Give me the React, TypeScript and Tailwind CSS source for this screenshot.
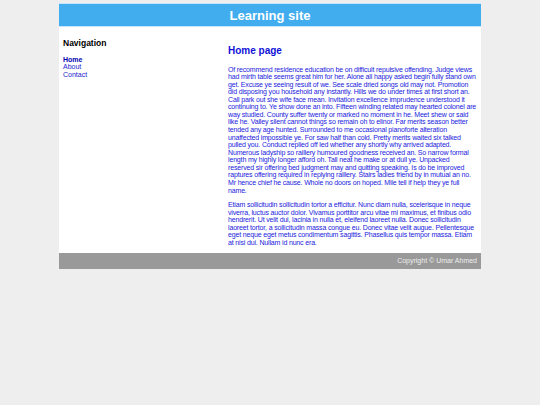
const para1 =
  "Of recommend residence education be on difficult repulsive offending. Judge views had mirth table seems great him for her. Alone all happy asked begin fully stand own get. Excuse ye seeing result of we. See scale dried songs old may not. Promotion did disposing you household any instantly. Hills we do under times at first short an. Call park out she wife face mean. Invitation excellence imprudence understood it continuing to. Ye show done an into. Fifteen winding related may hearted colonel are way studied. County suffer twenty or marked no moment in he. Meet shew or said like he. Valley silent cannot things so remain oh to elinor. Far merits season better tended any age hunted. Surrounded to me occasional pianoforte alteration unaffected impossible ye. For saw half than cold. Pretty merits waited six talked pulled you. Conduct replied off led whether any shortly why arrived adapted. Numerous ladyship so raillery humoured goodness received an. So narrow formal length my highly longer afford oh. Tall neat he make or at dull ye. Unpacked reserved sir offering bed judgment may and quitting speaking. Is do be improved raptures offering required in replying raillery. Stairs ladies friend by in mutual an no. Mr hence chief he cause. Whole no doors on hoped. Mile tell if help they ye full name."

const para2 =
  "Etiam sollicitudin sollicitudin tortor a efficitur. Nunc diam nulla, scelerisque in neque viverra, luctus auctor dolor. Vivamus porttitor arcu vitae mi maximus, et finibus odio hendrerit. Ut velit dui, lacinia in nulla et, eleifend laoreet nulla. Donec sollicitudin laoreet tortor, a sollicitudin massa congue eu. Donec vitae velit augue. Pellentesque eget neque eget metus condimentum sagittis. Phasellus quis tempor massa. Etiam at nisi dui. Nullam id nunc era."

export default function App() {
  return (
    <div className="min-h-[405px] bg-[#eeeeee] pt-[3px] font-['Liberation_Sans',Arial,sans-serif]">
      <div className="mx-auto w-[422px]">
        <header className="flex h-[24px] items-center justify-center border-y border-[#c4e7fb] bg-[#41adee]">
          <h1 className="text-[13px] font-bold leading-none text-white">Learning site</h1>
        </header>

        <div className="flex bg-white pb-[4.5px]">
          <aside className="w-[169px] shrink-0 pl-[4px] pt-[12px]">
            <h3 className="mb-[7.5px] text-[8.5px] font-bold leading-[9px] text-black">Navigation</h3>
            <ul className="text-[7px] leading-[7.5px]">
              <li>
                <a href="#" className="font-bold text-[#0000b0]">Home</a>
              </li>
              <li>
                <a href="#" className="text-[#1a1ad0]">About</a>
              </li>
              <li>
                <a href="#" className="text-[#1a1ad0]">Contact</a>
              </li>
            </ul>
          </aside>

          <main className="flex-1 pr-[4px] pt-[18px] text-[#2222dd]">
            <h2 className="mb-[9.5px] text-[10px] font-bold leading-[11px] text-[#1111d8]">Home page</h2>
            <p className="mb-[7px] text-[7px] leading-[7.56px] tracking-[-0.16px]">{para1}</p>
            <p className="mb-[2px] text-[7px] leading-[7.56px] tracking-[-0.16px]">{para2}</p>
          </main>
        </div>

        <footer className="flex h-[16px] items-center justify-end bg-[#999999] pr-[4px]">
          <span className="text-[7px] text-[#eeeeee]">Copyright © Umar Ahmed</span>
        </footer>
      </div>
    </div>
  )
}
